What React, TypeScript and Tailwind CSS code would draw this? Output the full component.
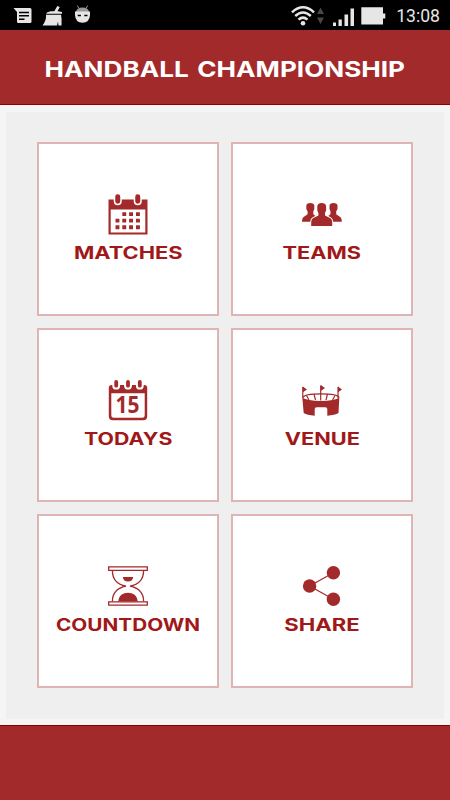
import type { ReactNode } from "react";

const RED = "#a32a2a";

function StatusBar() {
  return (
    <div className="flex h-[30px] items-center bg-black text-[#e6e6e6]">
      <svg className="h-[30px] w-[100px]" viewBox="0 0 100 30" fill="currentColor">
        <path d="M13.500 8H30q1.500 0 1.500 1.500v12.200q0 1.300-1.500 1.300H18.300q-1.300 0-1.300-1.300V12z" />
        <path d="M19 12.500h10M19 15.800h10M19 19.200h5.500" stroke="#000" strokeWidth="1.400" />
        <path d="M57.300 6l2.500 1-3 5.500h-3.200zM47 12.500q6-2.500 15-.5v1.700H46zM46 14.800h15q1 4 .5 10.700h-3l-.5-4-1 4H42.500q4-5 3.500-10.700z" />
        <path d="M79 8.500L77.300 5.500M86 8.500l1.700-3" stroke="#999" />
        <path d="M76 12q.5-4.500 6.500-4.500T89 12z" fill="#999" />
        <path d="M75 11.500h15v3.500q-.5 7.800-7.500 7.800T75 15z" />
        <path d="M77.700 15.500h3.200M84.300 15.500h3.200" stroke="#000" strokeWidth="1.400" />
      </svg>
      <svg className="ml-auto h-[30px] w-[100px]" viewBox="0 0 100 30" fill="none">
        <g stroke="currentColor" strokeWidth="2.500">
          <path d="M2 12.300q11-10 22 0" />
          <path d="M5.200 16q7.800-7 15.600 0" />
          <path d="M8.500 19.600q4.500-4 9 0" />
        </g>
        <circle cx="13" cy="23.300" r="2.300" fill="currentColor" />
        <path d="M27 14l3.500-6.500L34 14zM27 17.500h7L30.500 24z" fill="#484848" />
        <path d="M43 22.500h3V26h-3zM48.500 19.500h3.300V26h-3.300zM54.500 14.500h3.600V26h-3.600zM60.500 8.500H64V26h-3.500z" fill="currentColor" />
        <path d="M71.300 7.300H93v6.200h2.300v5H93v6H71.300z" fill="currentColor" />
      </svg>
      <span className="mr-[10px] ml-[6px] pt-[3px] font-[Roboto,sans-serif] text-[17.600px] leading-none">13:08</span>
    </div>
  );
}

function MatchesIcon() {
  return (
    <svg className="size-10 overflow-visible" viewBox="0 0 40 40" fill={RED}>
      <path d="M.5 5.500h39v35H.5zM2.700 15.500v23h34.600v-23z" fillRule="evenodd" />
      <g stroke="#fff" strokeWidth="1.500">
        <rect x="6.500" y="-.5" width="6.500" height="11" rx="3.200" />
        <rect x="26.500" y="-.5" width="6.500" height="11" rx="3.200" />
      </g>
      <path d="M14.300 18.200h3.900v3.900h-3.900zM21.100 18.200H25v3.900h-3.900zM28 18.200h3.900v3.900H28zM7.500 24.700h3.900v3.900H7.500zM14.300 24.700h3.900v3.900h-3.900zM21.100 24.700H25v3.900h-3.900zM28 24.700h3.900v3.900H28zM7.500 31.300h3.900v3.900H7.500zM14.300 31.300h3.900v3.900h-3.900zM21.100 31.300H25v3.900h-3.900zM28 31.300h3.900v3.900H28z" />
    </svg>
  );
}

function TeamsIcon() {
  return (
    <svg className="size-10" viewBox="0 0 40 40" fill={RED}>
      <path d="M4.300 11.500Q4.500 9 8.300 9t4 2.500v3.500l-1 2.500v2.500q1 1.500 2.500 2l-4 2.500v3.300H0q0-4 2-5l3.600-2.500v-2.800l-1.300-2.500z" />
      <path d="M35.500 11.500Q35.300 9 31.500 9t-4 2.500v3.500l1 2.500v2.500q-1 1.500-2.500 2l4 2.500v3.300h9.800q0-4-2-5l-3.600-2.500v-2.800l1.300-2.500z" />
      <path
        d="M15.300 12.500q0-3.500 4.400-3.500t4.400 3.500v4l-1.100 2.500v2.500l5.500 2.800q1.700.9 1.700 4V32H9.200v-3.700q0-3.100 1.700-4l5.500-2.800V19l-1.100-2.500z"
        stroke="#fff"
        strokeWidth="2"
        paintOrder="stroke"
      />
    </svg>
  );
}

function TodaysIcon() {
  return (
    <svg className="size-10 overflow-visible" viewBox="0 0 40 40" fill={RED}>
      <path d="M.8 8q0-3 3-3h32.400q3 0 3 3v28q0 4.300-4 4.300H4.800q-4 0-4-4.300zM3.300 13.300v21.900q0 2.500 2.300 2.500h28.800q2.300 0 2.300-2.500V13.300z" fillRule="evenodd" />
      <g stroke="#fff" strokeWidth="2">
        <rect x="5.300" y="-1" width="5.800" height="9.600" rx="2.900" />
        <rect x="17.100" y="-1" width="5.800" height="9.600" rx="2.900" />
        <rect x="28.900" y="-1" width="5.800" height="9.600" rx="2.900" />
      </g>
      <text x="19.500" y="33" textAnchor="middle" fontFamily="Open Sans, sans-serif" fontSize="22.500" fontWeight="700" textLength="24" lengthAdjust="spacingAndGlyphs">
        15
      </text>
    </svg>
  );
}

function VenueIcon() {
  return (
    <svg className="size-10" viewBox="0 0 40 40" fill={RED}>
      <path d="M.3 17.500Q5 20.900 19 20.900t18.300-3.400L36.500 33q-3.500 2.200-11.200 2.700V29q0-1.800-2-1.800h-8.600q-2 0-2 1.800v6.700Q5 35.200 1.700 33z" />
      <g fill="none" stroke={RED} strokeWidth="1.200">
        <path d="M.8 18V7M18.700 14V5.500M36 18V7" />
        <path d="M.8 17.500Q2.500 13.800 19 13.800t18.200 3.700" />
        <path d="M4.500 15.500L7 20M12 14l1.500 6M18.700 13.500v7M25.500 14L24 20M33 15.500L30.500 20" />
      </g>
      <path d="M.8 6.500L5 9.600.8 12.300zM18.700 5L23 8l-4.300 3zM36 6.500l4 3.100-4 2.700z" />
    </svg>
  );
}

function CountdownIcon() {
  return (
    <svg className="size-10" viewBox="0 0 40 40" fill={RED}>
      <g fill="none" stroke={RED} strokeWidth="1.300">
        <path d="M.7.900h38.600v3.400H.7zM.7 35.800h38.600v3.400H.7z" />
        <path d="M4.400 4.500C4.400 13 9 18.500 18 20.200 9 22 4.400 27 4.400 35.500M35.600 4.500C35.600 13 31 18.500 22 20.200c9 1.800 13.600 6.800 13.600 15.300" />
      </g>
      <path d="M14.700 11h10.600q-.8 4.600-5.300 4.600T14.700 11zM10.300 35.500C10.800 29.500 15 26.800 20 26.800s9.200 2.700 9.700 8.700z" />
    </svg>
  );
}

function ShareIcon() {
  return (
    <svg className="size-10 overflow-visible" viewBox="0 0 40 40" fill={RED}>
      <path d="M31.400 6.800L7.600 20l23.800 13.200" fill="none" stroke={RED} strokeWidth="1.200" />
      <circle cx="7.600" cy="20" r="6.700" />
      <circle cx="31.400" cy="6.800" r="6.700" />
      <circle cx="31.400" cy="33.200" r="6.700" />
    </svg>
  );
}

type Item = { label: string; icon: ReactNode; stretch: string };

const items: Item[] = [
  { label: "MATCHES", icon: <MatchesIcon />, stretch: "scale-x-[1.285]" },
  { label: "TEAMS", icon: <TeamsIcon />, stretch: "scale-x-[1.28]" },
  { label: "TODAYS", icon: <TodaysIcon />, stretch: "scale-x-[1.255]" },
  { label: "VENUE", icon: <VenueIcon />, stretch: "scale-x-[1.28]" },
  { label: "COUNTDOWN", icon: <CountdownIcon />, stretch: "scale-x-[1.22]" },
  { label: "SHARE", icon: <ShareIcon />, stretch: "scale-x-[1.3]" },
];

function Card({ label, icon, stretch }: Item) {
  return (
    <button className="flex h-[174px] flex-col items-center border-2 border-[#dfb4b4] bg-white pt-[50px]">
      {icon}
      <span className={`mt-[9px] text-[17px] leading-5 font-bold text-[#a01818] ${stretch}`}>{label}</span>
    </button>
  );
}

export default function App() {
  return (
    <div className="flex h-[800px] w-[450px] flex-col overflow-hidden bg-[#f5f5f5] font-[Inter,sans-serif]">
      <StatusBar />
      <header className="flex h-[75px] justify-center border-b border-[#900000] bg-[#a32a2a] pt-[27px]">
        <h1 className="scale-x-[1.187] text-[22px] leading-6 font-bold [word-spacing:2px] whitespace-nowrap text-white">HANDBALL CHAMPIONSHIP</h1>
      </header>
      <main className="mx-1.5 mt-[7px] mb-[6px] grid flex-1 grid-cols-[182px_182px] content-start gap-3 bg-[#efefef] pt-[30px] pl-[31px]">
        {items.map((item) => (
          <Card key={item.label} {...item} />
        ))}
      </main>
      <footer className="h-[75px] border-t border-[#8a0000] bg-[#a32a2a]" />
    </div>
  );
}
